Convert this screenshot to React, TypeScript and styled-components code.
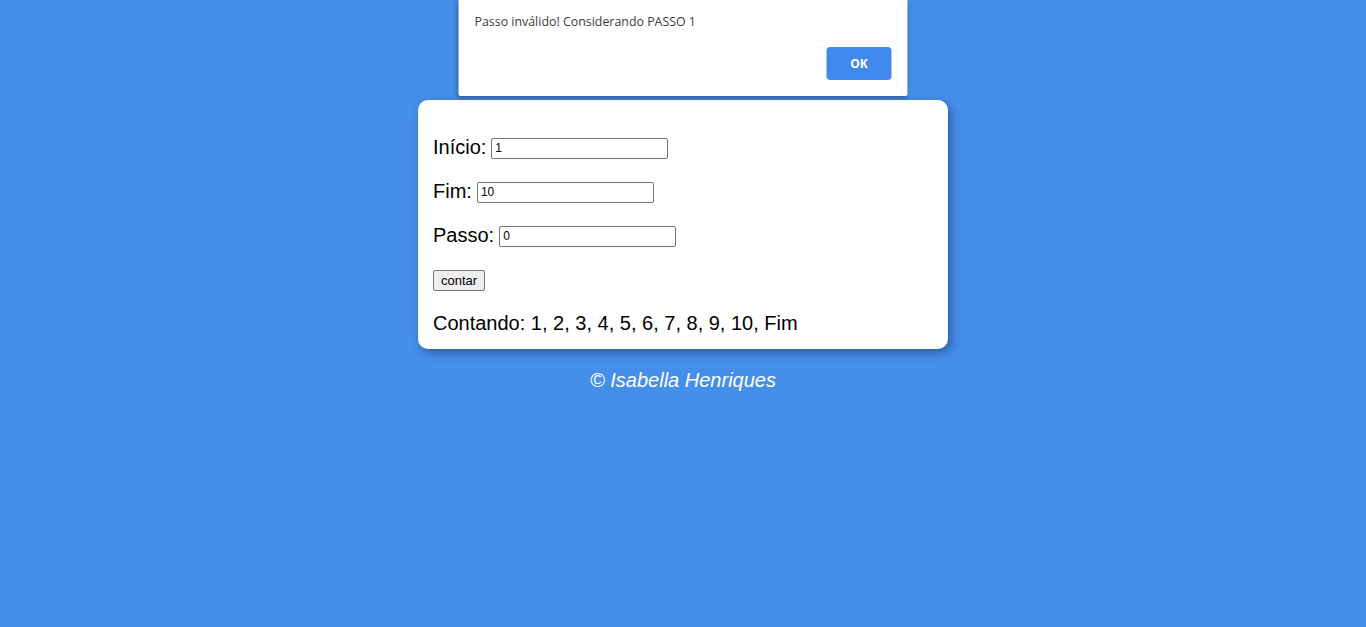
import React from "react";
import styled, { createGlobalStyle } from "styled-components";

const Global = createGlobalStyle`
  html, body { margin: 0; padding: 0; }
  body {
    background: #458eea;
    font-family: "Liberation Sans", Arial, sans-serif;
    min-height: 627px;
    overflow: hidden;
  }
`;

const Page = styled.div`
  display: flex;
  flex-direction: column;
  align-items: center;
  padding-top: 100px;
`;

const Card = styled.section`
  box-sizing: border-box;
  width: 530px;
  background: #fff;
  border-radius: 10px;
  padding: 15px 15px 14px;
  box-shadow: 3px 4px 8px rgba(20, 40, 90, 0.45);
`;

const Row = styled.p`
  margin: 20px 0;
  height: 24px;
  font-size: 20px;
  color: #000;
  display: flex;
  align-items: center;
  gap: 5px;
  &:last-child { margin-bottom: 0; }
`;

const Field = styled.input`
  box-sizing: border-box;
  width: 177px;
  height: 21px;
  margin-top: 2px;
  border: 1px solid #767676;
  border-radius: 2px;
  padding: 1px 3px;
  font-family: "Liberation Sans", Arial, sans-serif;
  font-size: 12px;
  color: #000;
  background: #fff;
`;

const Button = styled.button`
  box-sizing: border-box;
  height: 21px;
  margin-top: 2px;
  padding: 1px 7px;
  border: 1px solid #767676;
  border-radius: 2px;
  background: #efefef;
  font-family: "Liberation Sans", Arial, sans-serif;
  font-size: 13px;
  color: #000;
`;

const Footer = styled.footer`
  margin-top: 20px;
  color: #fff;
  font-style: italic;
  font-size: 20px;
`;

const Dialog = styled.div`
  position: absolute;
  top: 0;
  left: 50%;
  transform: translateX(-50%);
  box-sizing: border-box;
  width: 449px;
  height: 96px;
  background: #fff;
  border-radius: 0 0 2px 2px;
  box-shadow: -1px 2px 4px rgba(0, 0, 0, 0.35);
  padding: 13px 16px 16px;
  display: flex;
  flex-direction: column;
  font-family: "Open Sans", "Noto Sans", sans-serif;
`;

const DialogText = styled.div`
  font-size: 12.4px;
  color: #3c3c3c;
  line-height: 18px;
`;

const DialogActions = styled.div`
  margin-top: auto;
  display: flex;
  justify-content: flex-end;
`;

const OkButton = styled.button`
  width: 65px;
  height: 33px;
  border: none;
  border-radius: 4px;
  background: #4289ee;
  color: #fff;
  font-family: "Open Sans", "Noto Sans", sans-serif;
  font-weight: 700;
  font-size: 12px;
`;

export default function App() {
  return (
    <>
      <Global />
      <Page>
        <Card>
          <Row>
            Início: <Field defaultValue="1" />
          </Row>
          <Row>
            Fim: <Field defaultValue="10" />
          </Row>
          <Row>
            Passo: <Field defaultValue="0" />
          </Row>
          <Row>
            <Button>contar</Button>
          </Row>
          <Row>Contando: 1, 2, 3, 4, 5, 6, 7, 8, 9, 10, Fim</Row>
        </Card>
        <Footer>© Isabella Henriques</Footer>
      </Page>
      <Dialog>
        <DialogText>Passo inválido! Considerando PASSO 1</DialogText>
        <DialogActions>
          <OkButton>OK</OkButton>
        </DialogActions>
      </Dialog>
    </>
  );
}
